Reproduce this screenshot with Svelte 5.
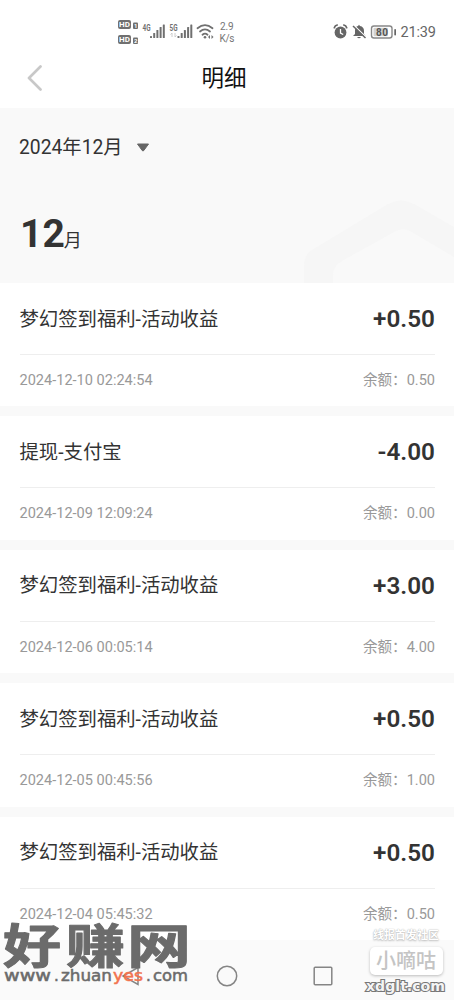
<script lang="ts">
	type Entry = {
		title: string;
		amount: string;
		time: string;
		balance: string;
	};

	const entries: Entry[] = [
		{ title: '梦幻签到福利-活动收益', amount: '+0.50', time: '2024-12-10 02:24:54', balance: '0.50' },
		{ title: '提现-支付宝', amount: '-4.00', time: '2024-12-09 12:09:24', balance: '0.00' },
		{ title: '梦幻签到福利-活动收益', amount: '+3.00', time: '2024-12-06 00:05:14', balance: '4.00' },
		{ title: '梦幻签到福利-活动收益', amount: '+0.50', time: '2024-12-05 00:45:56', balance: '1.00' },
		{ title: '梦幻签到福利-活动收益', amount: '+0.50', time: '2024-12-04 05:45:32', balance: '0.50' }
	];
</script>

<div class="screen">
	<div class="status-bar">
		<!-- SIM badges, signal strength, wifi, network speed -->
		<svg class="status-left" width="122" height="30" viewBox="0 0 122 30" fill="#707070" aria-hidden="true">
			<rect x="0" y="2" width="13" height="9" rx="2" />
			<rect x="0" y="17" width="13" height="9" rx="2" />
			<g font-weight="700" font-size="8" fill="#fff">
				<text x="1" y="9.4" textLength="11">HD</text>
				<text x="1" y="24.4" textLength="11">HD</text>
			</g>
			<rect x="15" y="4.5" width="5" height="6.5" rx="1" />
			<rect x="15" y="19.5" width="5" height="6.5" rx="1" />
			<g font-size="6" font-weight="700" fill="#fff">
				<text x="16" y="10">1</text>
				<text x="16" y="25">2</text>
			</g>
			<g font-size="9" font-weight="700">
				<text x="24.5" y="12.5" textLength="8" lengthAdjust="spacingAndGlyphs">4G</text>
				<text x="51.5" y="12.5" textLength="8" lengthAdjust="spacingAndGlyphs">5G</text>
			</g>
			<g id="signal">
				<rect x="32" y="18" width="2" height="2" rx=".5" />
				<rect x="35.2" y="15" width="2" height="5" rx=".5" />
				<rect x="38.4" y="12" width="2" height="8" rx=".5" />
				<rect x="41.6" y="9" width="2" height="11" rx=".5" />
				<rect x="44.8" y="6.5" width="2" height="13.5" rx=".5" />
			</g>
			<use href="#signal" x="27.500" />
			<path d="M54 15v4M52.5 16.5L54 15M57 15v4M58.5 17.5L57 19" fill="none" stroke="#ccc" stroke-width="1" />
			<g fill="none" stroke="#707070" stroke-width="1.8" stroke-linecap="round">
				<path d="M79.500 10.200q7.500-6.200 15 0" />
				<path d="M82 13.500q5-4.200 10 0" />
				<path d="M84.500 16.700q2.500-2.200 5 0" />
			</g>
			<circle cx="87" cy="19.300" r="1.300" />
			<path d="M90 19l2-2v4zM95.500 19l-2-2v4z" />
			<g font-size="10" fill="#757575">
				<text x="102" y="12" textLength="13.500">2.9</text>
				<text x="101.500" y="23.500" textLength="15">K/s</text>
			</g>
		</svg>

		<!-- alarm, muted bell, battery, clock -->
		<svg class="status-right" width="106" height="20" viewBox="0 0 106 20" fill="#666" aria-hidden="true">
			<circle cx="7.500" cy="10.500" r="5.900" />
			<path d="M1.300 5.700Q2 3.500 4.200 3M13.700 5.700Q13 3.500 10.800 3" fill="none" stroke="#666" stroke-width="1.700" stroke-linecap="round" />
			<path d="M7.500 7v4l2.700 1.500" fill="none" stroke="#fff" stroke-width="1.300" />
			<path d="M20 14l2-2V8.500Q22 4.500 25 4l1-1.300L27 4q4 .8 4 5v3l1.500 2zM24 15h4q-2 2.400-4 0" />
			<path d="M21 3.500l12.500 12" stroke="#fff" stroke-width="1.400" />
			<path d="M20 4l12.500 12" stroke="#666" stroke-width="1.500" />
			<rect x="38.500" y="4" width="20.500" height="12" rx="2.500" fill="#fff" stroke="#888" stroke-width="1.400" />
			<rect x="40.500" y="5.800" width="14.500" height="8.400" rx="1" fill="#d2d2d2" />
			<rect x="61.300" y="7" width="1.700" height="6.500" rx=".8" />
			<text x="43" y="13.600" font-size="10" font-weight="700" fill="#555" textLength="12">80</text>
			<text x="67.500" y="15.300" font-size="14.500" textLength="35.500" fill="#666">21:39</text>
		</svg>
	</div>

	<header class="title-bar">
		<svg class="back" width="16" height="28" viewBox="0 0 16 28" aria-hidden="true">
			<path d="M14.500 3.500L3 15 14.500 26.500" fill="none" stroke="#c8c8c8" stroke-width="2.700" stroke-linecap="round" stroke-linejoin="round" />
		</svg>
		<h1>明细</h1>
	</header>

	<section class="summary">
		<button type="button" class="month-picker">
			<span>2024年12月</span>
			<svg width="14" height="10" viewBox="0 0 14 10" aria-hidden="true">
				<path d="M1.500 1h11L7.800 7.500Q7 8.500 6.200 7.500z" fill="#666" stroke="#666" stroke-linejoin="round" />
			</svg>
		</button>
		<div class="month"><strong>12</strong><span>月</span></div>
		<svg class="backdrop" width="150" height="83" viewBox="0 0 150 83" aria-hidden="true">
			<path d="M0 83V66Q0 55 8 50L84 4Q97-3 110 4L150 27V57L106 31Q98 27 90 32L38 61Q29 66 29 75V83z" fill="#f6f6f6" />
		</svg>
	</section>

	<main class="list">
		{#each entries as entry}
			<article class="entry">
				<div class="entry-main">
					<span class="entry-title">{entry.title}</span>
					<span class="amount">{entry.amount}</span>
				</div>
				<div class="entry-meta">
					<span>{entry.time}</span>
					<span>余额：{entry.balance}</span>
				</div>
			</article>
		{/each}
	</main>

	<nav class="nav-bar">
		<svg width="20" height="22" viewBox="0 0 20 22" aria-hidden="true">
			<path d="M17 2.500v17L2 11z" fill="none" stroke="#858585" stroke-width="1.500" />
		</svg>
		<svg width="22" height="22" viewBox="0 0 22 22" aria-hidden="true">
			<circle cx="11" cy="11" r="9.700" fill="none" stroke="#858585" stroke-width="1.500" />
		</svg>
		<svg width="20" height="20" viewBox="0 0 20 20" aria-hidden="true">
			<rect x="1.200" y="1.200" width="17.600" height="17.600" rx="1" fill="none" stroke="#858585" stroke-width="1.500" />
		</svg>
	</nav>

	<svg class="mark-left" width="194" height="100" viewBox="0 0 194 100">
		<g class="mark-name" font-size="47">
			<text x="3" y="63" textLength="58" lengthAdjust="spacingAndGlyphs">好</text>
			<text x="66" y="63" textLength="59" lengthAdjust="spacingAndGlyphs">赚</text>
			<text x="127" y="63" textLength="64" lengthAdjust="spacingAndGlyphs">网</text>
		</g>
		<g class="mark-url" font-size="15">
			<text x="4" y="81" textLength="47" lengthAdjust="spacingAndGlyphs">www</text>
			<text x="54" y="81">.</text>
			<text x="61" y="81" textLength="51" lengthAdjust="spacingAndGlyphs">zhuan</text>
			<text x="113" y="81" textLength="30" lengthAdjust="spacingAndGlyphs" class="accent">yes</text>
			<text x="146" y="81">.</text>
			<text x="153" y="81" textLength="35" lengthAdjust="spacingAndGlyphs">com</text>
		</g>
	</svg>

	<div class="mark-right">
		<span class="mark-tagline">线报首发社区</span>
		<span class="mark-badge">小嘀咕</span>
		<svg width="86" height="20" viewBox="0 0 86 20">
			<text x="3" y="12.500" textLength="79" lengthAdjust="spacingAndGlyphs">xdglt.com</text>
		</svg>
	</div>
</div>

<style>
	:global(body) {
		background: #fff;
	}

	.screen {
		position: relative;
		display: flex;
		flex-direction: column;
		width: 454px;
		height: 1000px;
		overflow: hidden;
		background: #fff;
		color: #333;
		font-family: Roboto, 'Noto Sans CJK SC', sans-serif;
	}

	.status-bar {
		display: flex;
		flex: none;
		justify-content: space-between;
		height: 46px;
		padding: 0 14px 0 118px;
		box-sizing: border-box;
	}

	.status-left {
		margin-top: 18px;
	}

	.status-right {
		margin-top: 22px;
		margin-right: 1px;
	}

	.title-bar {
		display: grid;
		grid-template-columns: 1fr auto 1fr;
		align-items: center;
		flex: none;
		height: 62px;
		padding: 0 32px 0 26px;
	}

	.title-bar h1 {
		margin: 1px 0 0;
		color: #111;
		font-size: 22.500px;
		font-weight: 400;
		line-height: 32px;
	}

	.summary {
		position: relative;
		flex: none;
		height: 175px;
		padding: 23px 19px 0;
		box-sizing: border-box;
		background: #f9f9f9;
	}

	.month-picker {
		display: flex;
		align-items: center;
		gap: 13px;
		height: 30px;
		padding: 0;
		border: 0;
		background: none;
		color: #333;
		font: inherit;
		font-size: 19.300px;
	}

	.month-picker svg {
		margin-top: 3px;
	}

	.month {
		display: flex;
		align-items: baseline;
		margin: 44px 0 0 1px;
		line-height: 58px;
	}

	.month strong {
		font-size: 39px;
		font-weight: 700;
	}

	.month span {
		margin-left: -1px;
		font-size: 18px;
	}

	.backdrop {
		position: absolute;
		right: 0;
		bottom: 0;
	}

	.list {
		display: flex;
		flex: none;
		flex-direction: column;
		gap: 10px;
		height: 657px;
		overflow: hidden;
		background: #f9f9f9;
	}

	.entry {
		flex: none;
		height: 123.4px;
		padding: 0 19px 0 19.5px;
		box-sizing: border-box;
		background: #fff;
	}

	.entry-main {
		display: flex;
		align-items: center;
		justify-content: space-between;
		height: 71px;
		border-bottom: 1px solid #eee;
	}

	.entry-title {
		margin-top: 2px;
		font-size: 19.350px;
		line-height: 26px;
	}

	.amount {
		font-size: 24.300px;
		font-weight: 600;
	}

	.entry-meta {
		display: flex;
		align-items: center;
		justify-content: space-between;
		height: 51px;
		color: #999;
		font-size: 14.550px;
	}

	.entry-meta span:last-child {
		margin-top: -4px;
	}

	.nav-bar {
		display: flex;
		flex: none;
		align-items: center;
		justify-content: space-between;
		height: 60px;
		padding: 11px 121px 0 121px;
		box-sizing: border-box;
		background: #fafafa;
	}

	.mark-left {
		position: absolute;
		left: 0;
		bottom: 0;
	}

	.mark-name {
		fill: #6b6b6b;
		stroke: #6b6b6b;
		stroke-width: 1;
		stroke-linejoin: round;
		font-weight: 700;
	}

	.mark-url {
		fill: #6b6b6b;
		stroke: #6b6b6b;
		stroke-width: 0.500;
		font-family: 'DejaVu Sans', sans-serif;
	}

	.mark-url .accent {
		fill: #f2734f;
		stroke: #f2734f;
	}

	.mark-right {
		position: absolute;
		right: 5px;
		bottom: 2px;
		display: flex;
		flex-direction: column;
		align-items: center;
	}

	.mark-tagline {
		color: #fff;
		font-size: 11px;
		font-weight: 700;
		line-height: 14px;
		margin-top: -4px;
		text-shadow: 0 0 1px #aaa, 0 1px 2px #bbb;
	}

	.mark-badge {
		width: 73px;
		margin-top: 4px;
		margin-bottom: 3px;
		border-radius: 5px;
		background: #fff;
		box-shadow: 0 1px 3px #bbb;
		color: #c4c4c4;
		font-size: 20px;
		font-weight: 500;
		line-height: 28px;
		text-align: center;
	}

	.mark-right text {
		fill: #f4f4f4;
		stroke: #777;
		stroke-width: 2;
		paint-order: stroke;
		font-family: 'DejaVu Sans Condensed', 'DejaVu Sans', sans-serif;
		font-size: 14px;
		font-weight: 700;
	}
</style>
